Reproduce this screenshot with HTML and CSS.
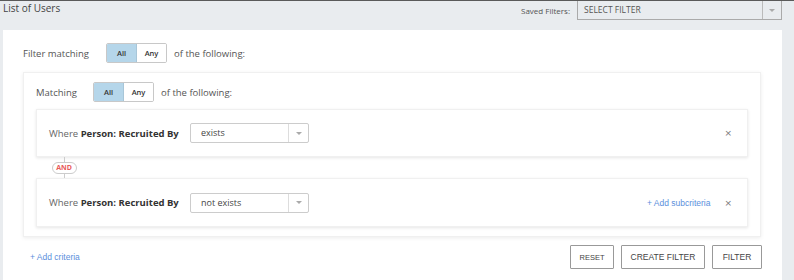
FILE: index.html
```html
<!DOCTYPE html>
<html>
<head>
<meta charset="utf-8">
<link rel="stylesheet" href="styles.css">
</head>
<body>
<div class="topbar">
  <div class="title">List of Users</div>
  <div class="saved">
    <span class="saved-label">Saved Filters:</span>
    <div class="saved-select">
      <span class="saved-value">SELECT FILTER</span>
      <span class="saved-arrow"><span class="caret"></span></span>
    </div>
  </div>
</div>
<div class="panel">
  <div class="match-row top-row">
    <span class="match-label wide">Filter matching</span>
    <div class="toggle"><span class="seg active">All</span><span class="seg">Any</span></div>
    <span class="match-tail">of the following:</span>
  </div>
  <div class="outer-card">
    <div class="match-row">
      <span class="match-label">Matching</span>
      <div class="toggle"><span class="seg active">All</span><span class="seg">Any</span></div>
      <span class="match-tail">of the following:</span>
    </div>
    <div class="crit-card first">
      <div class="crit-left">
        <span class="where">Where <b>Person: Recruited By</b></span>
        <div class="sel"><span class="sel-value">exists</span><span class="sel-arrow"><span class="caret"></span></span></div>
      </div>
      <div class="crit-right"><span class="close">×</span></div>
    </div>
    <div class="connector">
      <span class="line"></span>
      <span class="and">AND</span>
      <span class="line"></span>
    </div>
    <div class="crit-card">
      <div class="crit-left">
        <span class="where">Where <b>Person: Recruited By</b></span>
        <div class="sel"><span class="sel-value">not exists</span><span class="sel-arrow"><span class="caret"></span></span></div>
      </div>
      <div class="crit-right"><a class="link">+ Add subcriteria</a><span class="close">×</span></div>
    </div>
  </div>
  <div class="footer">
    <a class="link add">+ Add criteria</a>
    <div class="buttons">
      <span class="btn reset">RESET</span>
      <span class="btn create">CREATE FILTER</span>
      <span class="btn filter">FILTER</span>
    </div>
  </div>
</div>
</body>
</html>
```
FILE: styles.css
```css
html, body {
  margin: 0;
  padding: 0;
}
body {
  width: 794px;
  height: 280px;
  overflow: hidden;
  background: #e9ecef;
  border-top: 1px solid #5a5a5a;
  box-sizing: border-box;
  font-family: "Open Sans", "Liberation Sans", sans-serif;
  color: #555;
}
.topbar {
  display: flex;
  justify-content: space-between;
  align-items: flex-start;
  height: 29px;
}
.title {
  padding-left: 3px;
  font-size: 10px;
  line-height: 14px;
  color: #444;
}
.saved {
  display: flex;
  align-items: center;
  margin-right: 12px;
}
.saved-label {
  font-size: 8px;
  color: #555;
  margin-right: 7px;
  margin-top: -1px;
}
.saved-select {
  display: flex;
  width: 205px;
  height: 19px;
  box-sizing: border-box;
  border: 1px solid #aaa;
  border-top: none;
  background: #e9ecef;
}
.saved-value {
  flex: 1;
  font-size: 8.5px;
  font-weight: 400;
  line-height: 17px;
  padding-left: 6px;
  color: #555;
}
.saved-arrow {
  width: 18px;
  border-left: 1px solid #bbb;
  display: flex;
  align-items: center;
  justify-content: center;
}
.caret {
  width: 0;
  height: 0;
  border-left: 3px solid transparent;
  border-right: 3px solid transparent;
  border-top: 3px solid #aaa;
}
.panel {
  margin-left: 3px;
  width: 779px;
  height: 251px;
  background: #fff;
  box-sizing: border-box;
  padding: 13px 21px 0 20px;
}
.match-row {
  display: flex;
  align-items: center;
  height: 20px;
  font-size: 9.5px;
  color: #555;
}
.match-label {
  width: 57px;
}
.match-label.wide {
  width: 83px;
}
.toggle {
  display: flex;
  height: 20px;
  box-sizing: border-box;
  border: 1px solid #c8c8c8;
  border-radius: 2px;
  overflow: hidden;
}
.seg {
  width: 29px;
  display: flex;
  align-items: center;
  justify-content: center;
  font-size: 7.5px;
  font-weight: 600;
  color: #333;
  background: #fff;
}
.seg.active {
  background: #b5d6ea;
  color: #333;
  border-right: 1px solid #a8c6d8;
}
.match-tail {
  margin-left: 7px;
}
.top-row {
  margin-bottom: 9px;
}
.outer-card {
  border: 1px solid #f0f0f0;
  box-shadow: 0 1px 4px rgba(0, 0, 0, 0.08);
  padding: 9px 12px 9px 12px;
  width: 738px;
  box-sizing: border-box;
}
.outer-card > .match-row {
  margin-bottom: 7px;
}
.crit-card {
  display: flex;
  justify-content: space-between;
  align-items: center;
  height: 48px;
  box-sizing: border-box;
  border: 1px solid #f0f0f0;
  box-shadow: 0 1px 3px rgba(0, 0, 0, 0.1);
  padding: 0 15px 0 12px;
}
.crit-card + .connector + .crit-card {
  height: 49px;
}
.crit-left {
  display: flex;
  align-items: center;
}
.where {
  font-size: 9.5px;
  color: #666;
  width: 141px;
}
.where b {
  color: #333;
  font-weight: 700;
}
.sel {
  display: flex;
  width: 119px;
  height: 20px;
  box-sizing: border-box;
  border: 1px solid #ccc;
  border-radius: 2px;
}
.sel-value {
  flex: 1;
  font-size: 9px;
  line-height: 18px;
  padding-left: 10px;
  color: #444;
}
.sel-arrow {
  width: 19px;
  border-left: 1px solid #ddd;
  display: flex;
  align-items: center;
  justify-content: center;
}
.crit-right {
  display: flex;
  align-items: center;
}
.close {
  font-family: "DejaVu Sans", sans-serif;
  font-size: 9px;
  color: #777;
  line-height: 10px;
}
.link {
  font-family: "Liberation Sans", Arial, sans-serif;
  font-size: 8.5px;
  color: #5b8fdc;
  margin-right: 14px;
}
.connector {
  display: flex;
  flex-direction: column;
  align-items: center;
  width: 26px;
  height: 21px;
  margin-left: 15px;
}
.line {
  flex: 1;
  width: 1px;
  background: #ccc;
}
.and {
  height: 12px;
  width: 25px;
  flex: none;
  box-sizing: border-box;
  border: 1px solid #ccc;
  border-radius: 6px;
  font-size: 7px;
  font-weight: 700;
  color: #e85a5a;
  display: flex;
  align-items: center;
  justify-content: center;
}
.footer {
  display: flex;
  justify-content: space-between;
  align-items: center;
  margin-top: 8px;
  width: 739px;
}
.add {
  margin-left: 7px;
  margin-right: 0;
}
.buttons {
  display: flex;
  gap: 7px;
}
.btn {
  height: 24px;
  box-sizing: border-box;
  border: 1px solid #999;
  border-radius: 1px;
  font-family: "Liberation Sans", Arial, sans-serif;
  font-size: 8.5px;
  color: #444;
  display: flex;
  align-items: center;
  justify-content: center;
  padding: 0;
}
.btn.reset {
  font-size: 7.5px;
  width: 44px;
}
.btn.create {
  width: 84px;
}
.btn.filter {
  width: 50px;
}
```
